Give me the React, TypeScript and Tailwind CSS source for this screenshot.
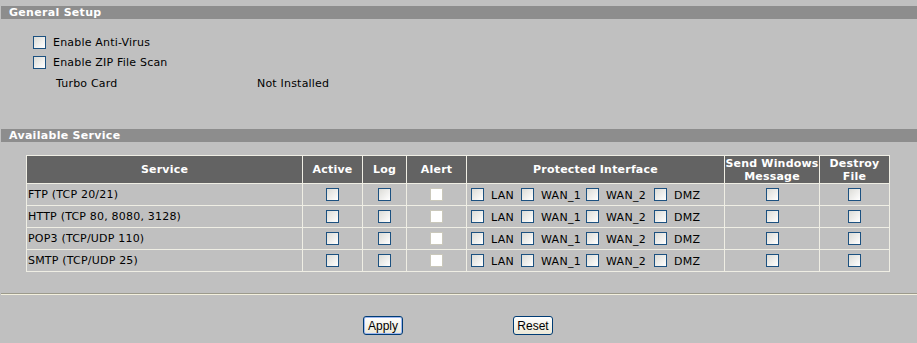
import React from "react";

const services = [
  "FTP (TCP 20/21)",
  "HTTP (TCP 80, 8080, 3128)",
  "POP3 (TCP/UDP 110)",
  "SMTP (TCP/UDP 25)",
];

function Box({ disabled = false }: { disabled?: boolean }) {
  return (
    <input
      type="checkbox"
      disabled={disabled}
      className={
        disabled
          ? "appearance-none block w-[13px] h-[13px] m-0 border border-[#cac8bb] bg-white shrink-0"
          : "appearance-none block w-[13px] h-[13px] m-0 border border-[#1c5180] bg-gradient-to-br from-[#dcdcd7] to-white shrink-0"
      }
    />
  );
}

function SectionBar({ title }: { title: string }) {
  return (
    <div className="pl-px">
      <div className="h-[13px] bg-[#8d8d8d] text-white font-bold tracking-[0.3px] leading-[13px] pl-2">{title}</div>
    </div>
  );
}

export default function App() {
  const th = "border border-[#efeee4] bg-[#636363] text-white font-bold tracking-[0.2px] whitespace-nowrap overflow-hidden text-center leading-[13px] p-0";
  const td = "border border-[#efeee4] p-0 h-[22px]";

  return (
    <div className="w-[917px] h-[343px] bg-[#c0c0c0] text-black text-[11px] font-['DejaVu_Sans',Verdana,sans-serif] overflow-hidden">
      <div className="pt-[6px]">
        <SectionBar title="General Setup" />
      </div>

      <div className="pl-[33px] pt-[17px] tracking-[0.2px]">
        <div className="flex gap-[7px] h-[20px] items-start">
          <Box />
          <span className="leading-[14px]">Enable Anti-Virus</span>
        </div>
        <div className="flex gap-[7px] h-[20px] items-start">
          <Box />
          <span className="leading-[14px]">Enable ZIP File Scan</span>
        </div>
        <div className="flex h-[20px] items-start pl-[23px] pt-px">
          <span className="w-[201px] leading-[13px]">Turbo Card</span>
          <span className="leading-[13px]">Not Installed</span>
        </div>
      </div>

      <div className="pt-[33px]">
        <SectionBar title="Available Service" />
      </div>

      <div className="pl-[26px] pt-[13px]">
        <table className="table-fixed border-collapse w-[863px] border border-[#efeee4]">
          <colgroup>
            <col className="w-[276px]" />
            <col className="w-[60px]" />
            <col className="w-[44px]" />
            <col className="w-[60px]" />
            <col className="w-[258px]" />
            <col className="w-[95px]" />
            <col className="w-[70px]" />
          </colgroup>
          <thead>
            <tr className="h-[28px]">
              <th className={th}>Service</th>
              <th className={th}>Active</th>
              <th className={th}>Log</th>
              <th className={th}>Alert</th>
              <th className={th}>Protected Interface</th>
              <th className={th}>
                Send Windows
                <br />
                Message
              </th>
              <th className={th}>
                Destroy
                <br />
                File
              </th>
            </tr>
          </thead>
          <tbody>
            {services.map((s) => (
              <tr key={s}>
                <td className={`${td} pl-px pt-[2px] tracking-[0.2px]`}>{s}</td>
                <td className={td}>
                  <div className="flex justify-center">
                    <Box />
                  </div>
                </td>
                <td className={td}>
                  <div className="flex justify-center">
                    <Box />
                  </div>
                </td>
                <td className={td}>
                  <div className="flex justify-center">
                    <Box disabled />
                  </div>
                </td>
                <td className={td}>
                  <div className="flex items-center pl-[4px] tracking-[0.3px]">
                    <Box />
                    <span className="ml-[7px] mt-[3px] w-[30px]">LAN</span>
                    <Box />
                    <span className="ml-[7px] mt-[3px] w-[45px]">WAN_1</span>
                    <Box />
                    <span className="ml-[7px] mt-[3px] w-[48px]">WAN_2</span>
                    <Box />
                    <span className="ml-[7px] mt-[3px]">DMZ</span>
                  </div>
                </td>
                <td className={td}>
                  <div className="flex justify-center">
                    <Box />
                  </div>
                </td>
                <td className={td}>
                  <div className="flex justify-center">
                    <Box />
                  </div>
                </td>
              </tr>
            ))}
          </tbody>
        </table>
      </div>

      <div className="pt-[21px] pl-px">
        <div className="h-[2px] border-t border-[#9c9a8c] bg-[#f3f0de]" />
      </div>

      <div className="flex pt-[21px] pl-[363px] font-['Liberation_Sans',Tahoma,sans-serif] text-[12px]">
        <button className="w-[40px] h-[19px] rounded-[3px] border border-[#003c74] bg-gradient-to-b from-white to-[#ece9d8] shadow-[inset_0_0_0_1px_#9cb6f0] leading-[16px] p-0">
          Apply
        </button>
        <button className="ml-[110px] w-[40px] h-[19px] rounded-[3px] border border-[#003c74] bg-gradient-to-b from-white to-[#ece9d8] leading-[16px] p-0">
          Reset
        </button>
      </div>
    </div>
  );
}
